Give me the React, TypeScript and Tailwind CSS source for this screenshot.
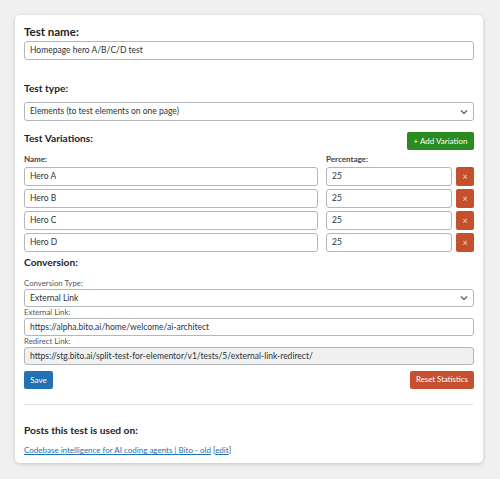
import React from "react";

const font = { fontFamily: 'Lato, "Open Sans", Arial, sans-serif' };

function Chevron() {
  return (
    <svg width="8" height="6" viewBox="0 0 8 6" className="absolute right-[5px] top-1/2 -translate-y-1/2">
      <path d="M1 1.5 L4 4.5 L7 1.5" fill="none" stroke="#50575e" strokeWidth="1.2" />
    </svg>
  );
}

function Field({
  value,
  className = "",
  disabled = false,
  h = "h-[19px]",
}: {
  value: string;
  className?: string;
  disabled?: boolean;
  h?: string;
}) {
  return (
    <div
      className={`flex ${h} items-center rounded-[3px] border border-[#b4b7ba] px-[5px] text-[8.5px] text-[#2c3338] ${
        disabled ? "bg-[#f0f0f1]" : "bg-white"
      } ${className}`}
    >
      <span className="truncate">{value}</span>
    </div>
  );
}

function Select({ value, h = "h-[19px]" }: { value: string; h?: string }) {
  return (
    <div className={`relative flex ${h} items-center rounded-[3px] border border-[#b4b7ba] bg-white px-[5px] text-[8.5px] text-[#2c3338]`}>
      <span>{value}</span>
      <Chevron />
    </div>
  );
}

function SmallLabel({ children }: { children: React.ReactNode }) {
  return <div className="h-[11px] text-[7.8px] leading-[11px] text-[#50575e]">{children}</div>;
}

export default function App() {
  const rows = ["Hero A", "Hero B", "Hero C", "Hero D"];
  return (
    <div className="min-h-[479px] bg-[#f0f0f1] pt-[15px]" style={font}>
      <div className="ml-[15px] h-[448px] w-[468px] rounded-[5px] bg-white px-[9px] pt-[9px] shadow-[0_1px_4px_rgba(0,0,0,0.18)]">
        <div className="h-[16px] text-[11.5px] font-bold leading-[16px] text-[#1d2327]">Test name:</div>
        <Field value="Homepage hero A/B/C/D test" className="mt-px" />

        <div className="mt-[20px] h-[16px] text-[10.2px] font-bold leading-[16px] text-[#1d2327]">Test type:</div>
        <div className="mt-[6px]">
          <Select value="Elements (to test elements on one page)" />
        </div>

        <div className="mt-[9px] flex items-start justify-between">
          <div className="h-[16px] text-[10.2px] font-bold leading-[16px] text-[#1d2327]">Test Variations:</div>
          <button className="mt-[2px] h-[18px] w-[67px] rounded-[2px] bg-[#2a8b1f] text-[8px] text-white">
            + Add Variation
          </button>
        </div>

        <div className="mt-[3px] flex h-[12px] text-[8px] font-bold leading-[12px] text-[#3c434a]">
          <div className="w-[302px]">Name:</div>
          <div>Percentage:</div>
        </div>
        <div className="mt-[2px] flex flex-col gap-[3px]">
          {rows.map((r) => (
            <div key={r} className="flex items-stretch">
              <Field value={r} className="w-[294px]" />
              <Field value="25" className="ml-[8px] w-[126px]" />
              <button className="ml-[4px] flex h-[19px] w-[18px] items-center justify-center rounded-[2px] bg-[#c4502e] text-[9px] leading-none text-[#f3d6cc]">
                ×
              </button>
            </div>
          ))}
        </div>

        <div className="mt-[2px] h-[16px] text-[10.2px] font-bold leading-[16px] text-[#1d2327]">Conversion:</div>
        <div className="mt-[8px]">
          <SmallLabel>Conversion Type:</SmallLabel>
          <Select value="External Link" h="h-[18px]" />
          <SmallLabel>External Link:</SmallLabel>
          <Field value="https://alpha.bito.ai/home/welcome/ai-architect" h="h-[18px]" />
          <SmallLabel>Redirect Link:</SmallLabel>
          <Field
            value="https://stg.bito.ai/split-test-for-elementor/v1/tests/5/external-link-redirect/"
            h="h-[18px]"
            disabled
          />
        </div>

        <div className="mt-[6px] flex justify-between">
          <button className="h-[18px] w-[29px] rounded-[2px] bg-[#2271b1] text-[8px] text-white">Save</button>
          <button className="h-[18px] w-[64px] rounded-[2px] bg-[#c4502e] text-[7.8px] text-white">Reset Statistics</button>
        </div>

        <div className="mt-[15px] h-px bg-[#e5e5e5]" />

        <div className="mt-[17px] h-[16px] text-[10.2px] font-bold leading-[16px] text-[#1d2327]">
          Posts this test is used on:
        </div>
        <div className="mt-[6px] text-[8px] leading-[12px] text-[#3c434a]">
          <span className="text-[#2271b1] underline">Codebase intelligence for AI coding agents | Bito - old</span>{" "}
          [<span className="text-[#2271b1] underline">edit</span>]
        </div>
      </div>
    </div>
  );
}
